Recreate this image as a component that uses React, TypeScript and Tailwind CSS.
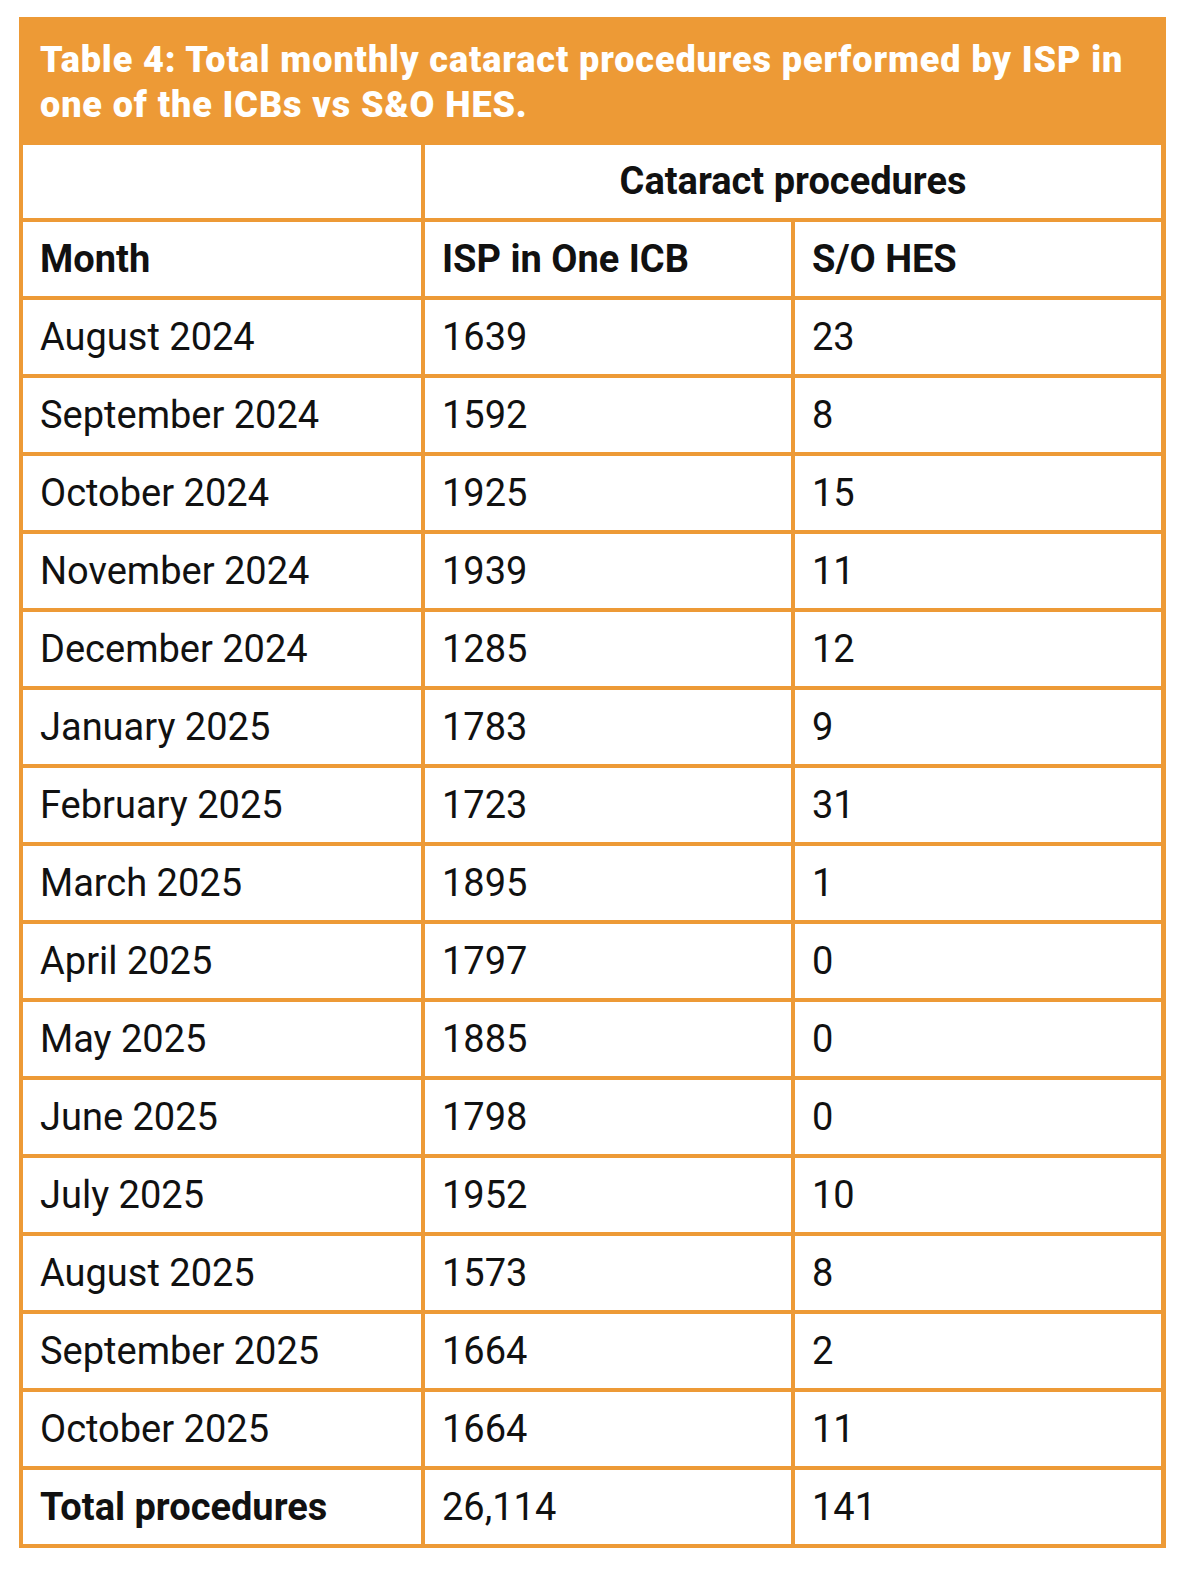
import React from "react";

const rows: [string, string, string][] = [
  ["August 2024", "1639", "23"],
  ["September 2024", "1592", "8"],
  ["October 2024", "1925", "15"],
  ["November 2024", "1939", "11"],
  ["December 2024", "1285", "12"],
  ["January 2025", "1783", "9"],
  ["February 2025", "1723", "31"],
  ["March 2025", "1895", "1"],
  ["April 2025", "1797", "0"],
  ["May 2025", "1885", "0"],
  ["June 2025", "1798", "0"],
  ["July 2025", "1952", "10"],
  ["August 2025", "1573", "8"],
  ["September 2025", "1664", "2"],
  ["October 2025", "1664", "11"],
];

const cell = "bg-white h-[74px] flex items-center pl-[17px] text-[38px] text-[#111]";

export default function App() {
  return (
    <div className="w-[1200px] h-[1578px] bg-white pt-[17px] pl-[19px]" style={{ fontFamily: "Roboto, 'Liberation Sans', sans-serif" }}>
      <div className="w-[1147px] bg-[#ED9A36]">
        <div className="h-[128px] pl-[21px] pt-[21px] text-white font-black text-[36px] leading-[45px] tracking-[0.9px] whitespace-nowrap">
          Table 4: Total monthly cataract procedures performed by ISP in
          <br />
          one of the ICBs vs S&amp;O HES.
        </div>
        <div className="grid grid-cols-[398px_366px_366px] gap-[4px] px-[4px] pb-[4px]">
          <div className="bg-white h-[73px]" />
          <div className="col-span-2 bg-white h-[73px] flex items-center justify-center font-bold text-[38px] text-[#111]">
            Cataract procedures
          </div>
          <div className={cell + " font-bold"}>Month</div>
          <div className={cell + " font-bold"}>ISP in One ICB</div>
          <div className={cell + " font-bold"}>S/O HES</div>
          {rows.map((r) => (
            <React.Fragment key={r[0]}>
              <div className={cell}>{r[0]}</div>
              <div className={cell}>{r[1]}</div>
              <div className={cell}>{r[2]}</div>
            </React.Fragment>
          ))}
          <div className={cell + " font-bold"}>Total procedures</div>
          <div className={cell}>26,114</div>
          <div className={cell}>141</div>
        </div>
      </div>
    </div>
  );
}
